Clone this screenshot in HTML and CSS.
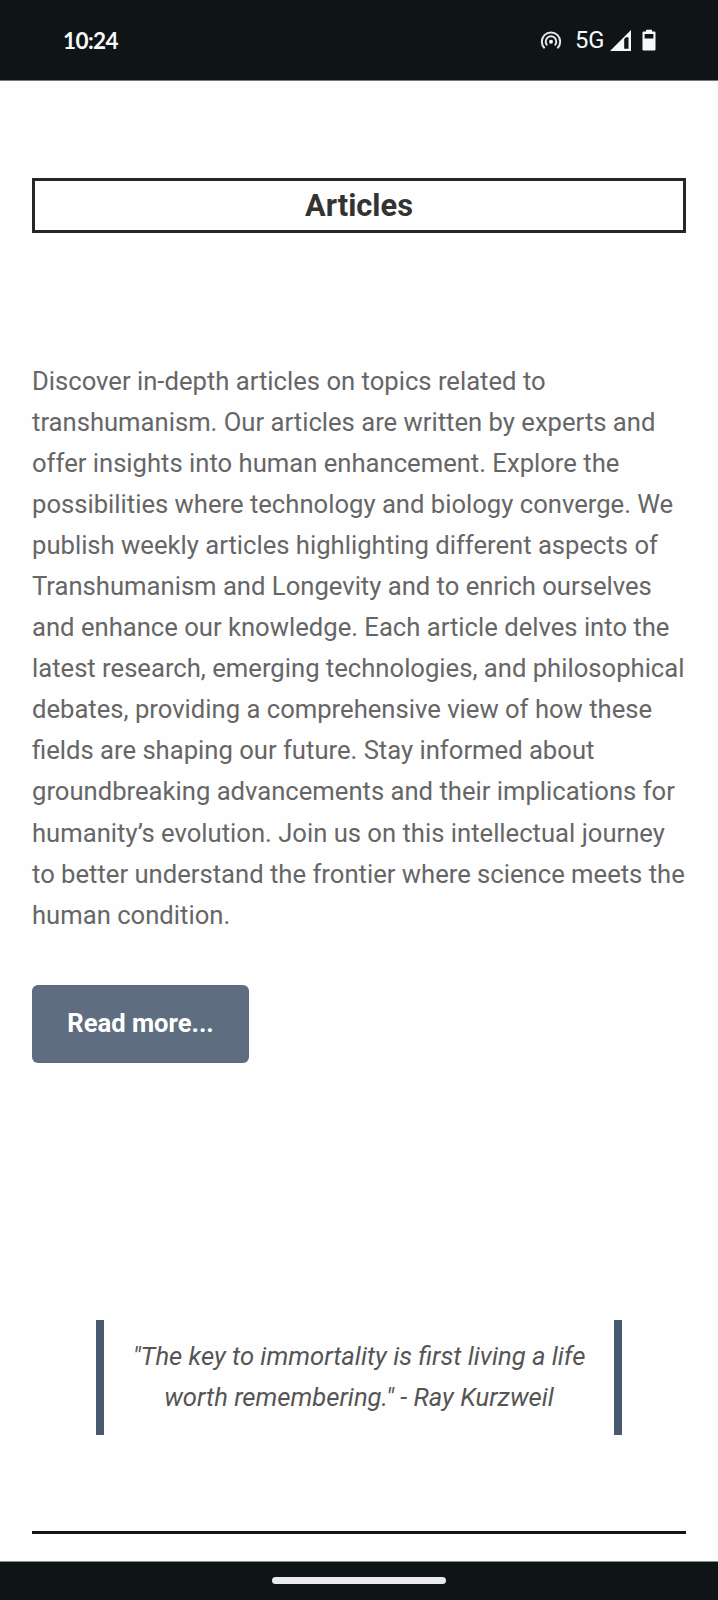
FILE: index.html
```html
<!DOCTYPE html>
<html lang="en">
<head>
<meta charset="utf-8">
<title>Articles</title>
<link rel="stylesheet" href="styles.css">
</head>
<body>
<div class="screen">
  <header class="status">
    <span class="clock">10:24</span>
    <div class="status-icons">
      <svg class="hotspot" width="22" height="20" viewBox="0 0 22 20" fill="none" stroke="#e6e9ea" stroke-width="2">
        <path d="M4.6 18.2A9.2 9.2 0 1 1 17.4 18.2"/>
        <path d="M7.3 15.4A5.3 5.3 0 1 1 14.7 15.4"/>
        <circle cx="11" cy="11.8" r="2" fill="#f3f5f6" stroke="none"/>
      </svg>
      <span class="network">5G</span>
      <svg class="signal" width="21" height="21" viewBox="0 0 21 21">
        <path fill="#f6f8f9" fill-rule="evenodd" d="M0 21L21 0V21ZM14.2 9V18.7H18.5V7.2H16Z"/>
      </svg>
      <svg class="battery" width="14" height="22" viewBox="0 0 14 22">
        <path fill="#f6f8f9" fill-rule="evenodd" d="M4 .8H10V2.5H12.5Q13.5 2.5 13.5 3.5V20.5Q13.5 21.5 12.5 21.5H1.5Q.5 21.5 .5 20.5V3.5Q.5 2.5 1.5 2.5H4ZM2.6 5V9.4H11.4V5Z"/>
      </svg>
    </div>
  </header>
  <main class="content">
    <h1 class="title">Articles</h1>
    <p class="intro">Discover in-depth articles on topics related to<br>transhumanism. Our articles are written by experts and<br>offer insights into human enhancement. Explore the<br>possibilities where technology and biology converge. We<br>publish weekly articles highlighting different aspects of<br>Transhumanism and Longevity and to enrich ourselves<br>and enhance our knowledge. Each article delves into the<br>latest research, emerging technologies, and philosophical<br>debates, providing a comprehensive view of how these<br>fields are shaping our future. Stay informed about<br>groundbreaking advancements and their implications for<br>humanity’s evolution. Join us on this intellectual journey<br>to better understand the frontier where science meets the<br>human condition.</p>
    <a class="button">Read more...</a>
    <blockquote class="quote">"The key to immortality is first living a life<br>worth remembering." - Ray Kurzweil</blockquote>
    <hr class="rule">
  </main>
  <footer class="navbar"><span class="handle"></span></footer>
</div>
</body>
</html>
```
FILE: styles.css
```css
* { box-sizing: border-box; }
body { margin: 0; background: #fefefe; font-family: Roboto, "Liberation Sans", sans-serif; }
.screen { width: 718px; height: 1600px; display: flex; flex-direction: column; overflow: hidden; }
.status {
  height: 81px; flex: none; padding: 0 62px 0 63px;
  display: flex; justify-content: space-between; align-items: flex-start;
  background: #0f1417; border-bottom: 1px solid #77797a; color: #f6f8f9;
}
.clock { margin-top: 28px; font: 700 22.5px/26px Lato, sans-serif; letter-spacing: -0.6px; }
.status-icons { display: flex; align-items: flex-start; }
.hotspot { margin-top: 30px; }
.network { margin: 26px 0 0 13px; width: 30px; font-size: 23.8px; line-height: 28px; white-space: nowrap; }
.signal { margin: 30px 0 0 5px; }
.battery { margin: 29px 0 0 11px; }
.content { flex: 1; padding: 97px 32px 0; display: flex; flex-direction: column; }
.title {
  height: 55px; margin: 0; border: 3px solid #25282b; text-align: center;
  font-size: 30.8px; font-weight: 700; line-height: 49px; color: #333;
}
.intro { margin: 128px 0 0; height: 575px; color: #666; font-size: 25.64px; line-height: 41.04px; white-space: nowrap; }
.button {
  width: 217px; height: 78px; margin-top: 49px; border-radius: 6px;
  background: #5f6d80; color: #fff; text-align: center;
  font-size: 25.6px; font-weight: 700; line-height: 77px;
}
.quote {
  height: 115px; margin: 257px 64px 0; padding-top: 16px;
  border: solid #475a70; border-width: 0 8px;
  color: #555; font-size: 25.64px; font-style: italic; line-height: 40.5px;
  text-align: center; white-space: nowrap;
}
.rule { width: 100%; height: 3px; margin: 96px 0 0; border: 0; background: #151518; }
.navbar {
  height: 39px; flex: none; padding-top: 15px; display: flex; justify-content: center;
  background: #0f1417; border-top: 1px solid #87918f;
}
.handle { width: 174px; height: 7px; border-radius: 4px; background: #e8eaeb; }
```
